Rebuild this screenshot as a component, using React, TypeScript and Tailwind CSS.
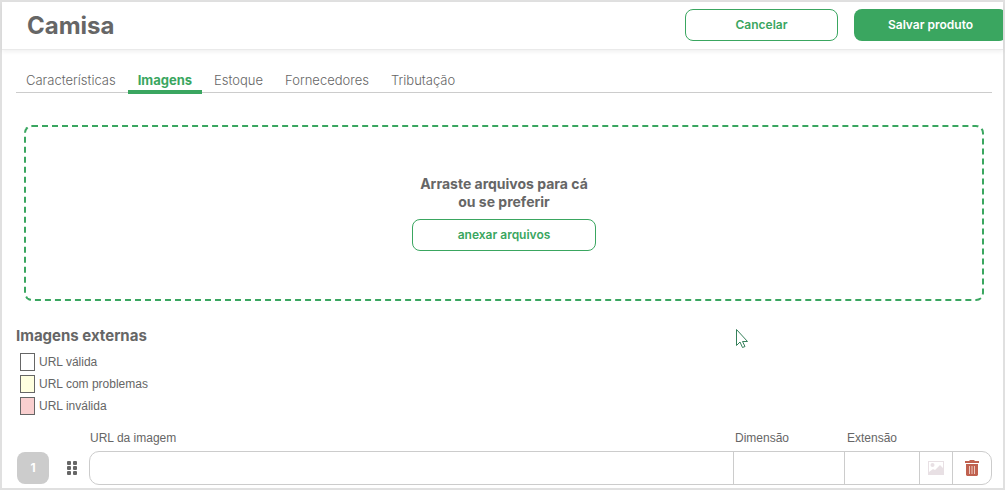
import React, { useState } from "react";

const TAB_CSS =
  "h-6 px-[10px] text-[13px] leading-5 font-light text-[#666666] border-b-4 border-transparent";
const ACTIVE_TAB_CSS =
  "h-6 px-[10px] text-[13px] leading-5 font-bold text-[#3aa660] border-b-4 border-[#3aa660]";
const CELL_CSS = "h-full w-full min-w-0 px-2 border-r border-[#cccccc] outline-none";

const TABS = [
  "Características",
  "Imagens",
  "Estoque",
  "Fornecedores",
  "Tributação",
];

const LEGEND = [
  { label: "URL válida", color: "bg-white" },
  { label: "URL com problemas", color: "bg-[#ffffe0]" },
  { label: "URL inválida", color: "bg-[#f9cfcf]" },
];

const PictureIcon: React.FC = () => (
  <svg width="16" height="14" viewBox="0 0 16 14" fill="#e8e0e4">
    <path fillRule="evenodd" d="M0 0h16v14H0zM1 1v10l4-3 2 1 5-5 3 3V1z" />
    <circle cx="4.500" cy="4" r="2" />
  </svg>
);

const TrashIcon: React.FC = () => (
  <svg width="14" height="16" viewBox="0 0 14 16">
    <path
      fill="#c0614f"
      d="M5 0h4l1 1h4v2H0V1h4zM1 4h12v11l-1 1H2l-1-1z"
    />
    <path stroke="#ecc9c0" d="M4.500 6v8M7 6v8M9.500 6v8" />
  </svg>
);

const Header: React.FC = () => (
  <header className="flex h-12 items-start overflow-hidden border-b border-[#eaeaea] pt-[7px] pl-[25px] shadow-[0_2px_4px_rgba(0,0,0,0.06)]">
    <h1 className="flex-1 text-2xl leading-[34px] font-bold text-[#666666]">
      Camisa
    </h1>
    <div className="-mr-1 flex shrink-0 gap-4 text-xs font-semibold">
      <button className="h-8 w-[153px] rounded-lg border border-[#3aa660] text-[#3aa660]">
        Cancelar
      </button>
      <button className="h-8 w-[153px] rounded-lg bg-[#3aa660] text-white">
        Salvar produto
      </button>
    </div>
  </header>
);

const ExternalImages: React.FC = () => (
  <section className="mt-6">
    <h2 className="text-[15px] leading-[22px] font-bold text-[#666666]">
      Imagens externas
    </h2>
    <ul className="mt-[6px] ml-1 flex flex-col gap-1 font-['Liberation_Sans',sans-serif] text-xs">
      {LEGEND.map(({ label, color }) => (
        <li key={label} className="flex items-center gap-1">
          <span className={`h-[18px] w-[15px] border border-[#666666] ${color}`} />
          {label}
        </li>
      ))}
    </ul>
    <div className="mt-[13px] grid grid-cols-[73px_1fr_111px_75px_72px] gap-y-[3px] font-['Liberation_Sans',sans-serif] text-xs leading-5">
      <label htmlFor="url" className="col-start-2 pl-px">
        URL da imagem
      </label>
      <label htmlFor="dimension" className="pl-px">
        Dimensão
      </label>
      <label htmlFor="extension" className="pl-[2px]">
        Extensão
      </label>
      <div className="col-span-5 flex items-center">
        <span className="ml-px flex size-8 items-center justify-center rounded-lg bg-[#cccccc] font-['Inter',sans-serif] font-bold text-white">
          1
        </span>
        <button aria-label="Mover" className="flex w-10 justify-center pl-[6px]">
          <svg width="11" height="14" viewBox="0 0 11 14" fill="#666666">
            <rect width="4" height="4" rx="1" />
            <rect x="6" width="4" height="4" rx="1" />
            <rect y="5" width="4" height="4" rx="1" />
            <rect x="6" y="5" width="4" height="4" rx="1" />
            <rect y="10" width="4" height="4" rx="1" />
            <rect x="6" y="10" width="4" height="4" rx="1" />
          </svg>
        </button>
        <div className="grid h-[34px] flex-1 grid-cols-[1fr_111px_75px_33px_38px] overflow-hidden rounded-[10px] border border-[#cccccc]">
          <input id="url" type="text" className={CELL_CSS} />
          <input id="dimension" type="text" className={CELL_CSS} />
          <input id="extension" type="text" className={CELL_CSS} />
          <button
            aria-label="Ver imagem"
            className="flex items-center justify-center border-r border-[#cccccc]"
          >
            <PictureIcon />
          </button>
          <button
            aria-label="Excluir imagem"
            className="flex items-center justify-center"
          >
            <TrashIcon />
          </button>
        </div>
      </div>
    </div>
  </section>
);

const App: React.FC = () => {
  const [activeTab, setActiveTab] = useState("Imagens");

  return (
    <div className="min-h-screen border-2 border-[#e0e0e0] bg-white font-['Inter',sans-serif] text-[#666666]">
      <Header />
      <main className="pt-5 pr-[11px] pb-[3px] pl-[14px]">
        <nav className="flex h-[23px] gap-[2px] border-b border-[#cccccc]">
          {TABS.map((tab) => (
            <button
              key={tab}
              className={tab === activeTab ? ACTIVE_TAB_CSS : TAB_CSS}
              onClick={() => setActiveTab(tab)}
            >
              {tab}
            </button>
          ))}
        </nav>
        <div className="mx-2 mt-8 flex h-44 flex-col items-center justify-center rounded-lg border-2 border-dashed border-[#3aa660]">
          <p className="text-center text-sm leading-[18px] font-bold">
            Arraste arquivos para cá
            <br />
            ou se preferir
          </p>
          <button className="mt-2 h-8 w-[184px] rounded-lg border border-[#3aa660] text-xs font-semibold text-[#3aa660]">
            anexar arquivos
          </button>
        </div>
        <ExternalImages />
      </main>
      <svg
        className="pointer-events-none absolute top-[328px] left-[735px]"
        width="14"
        height="21"
        viewBox="0 0 14 21"
        fill="white"
        stroke="#35805a"
      >
        <path d="M1.5 1.5v16l3.500-3.500 2.500 5.500 2.500-1-2.500-5h5z" />
      </svg>
    </div>
  );
};

export default App;
